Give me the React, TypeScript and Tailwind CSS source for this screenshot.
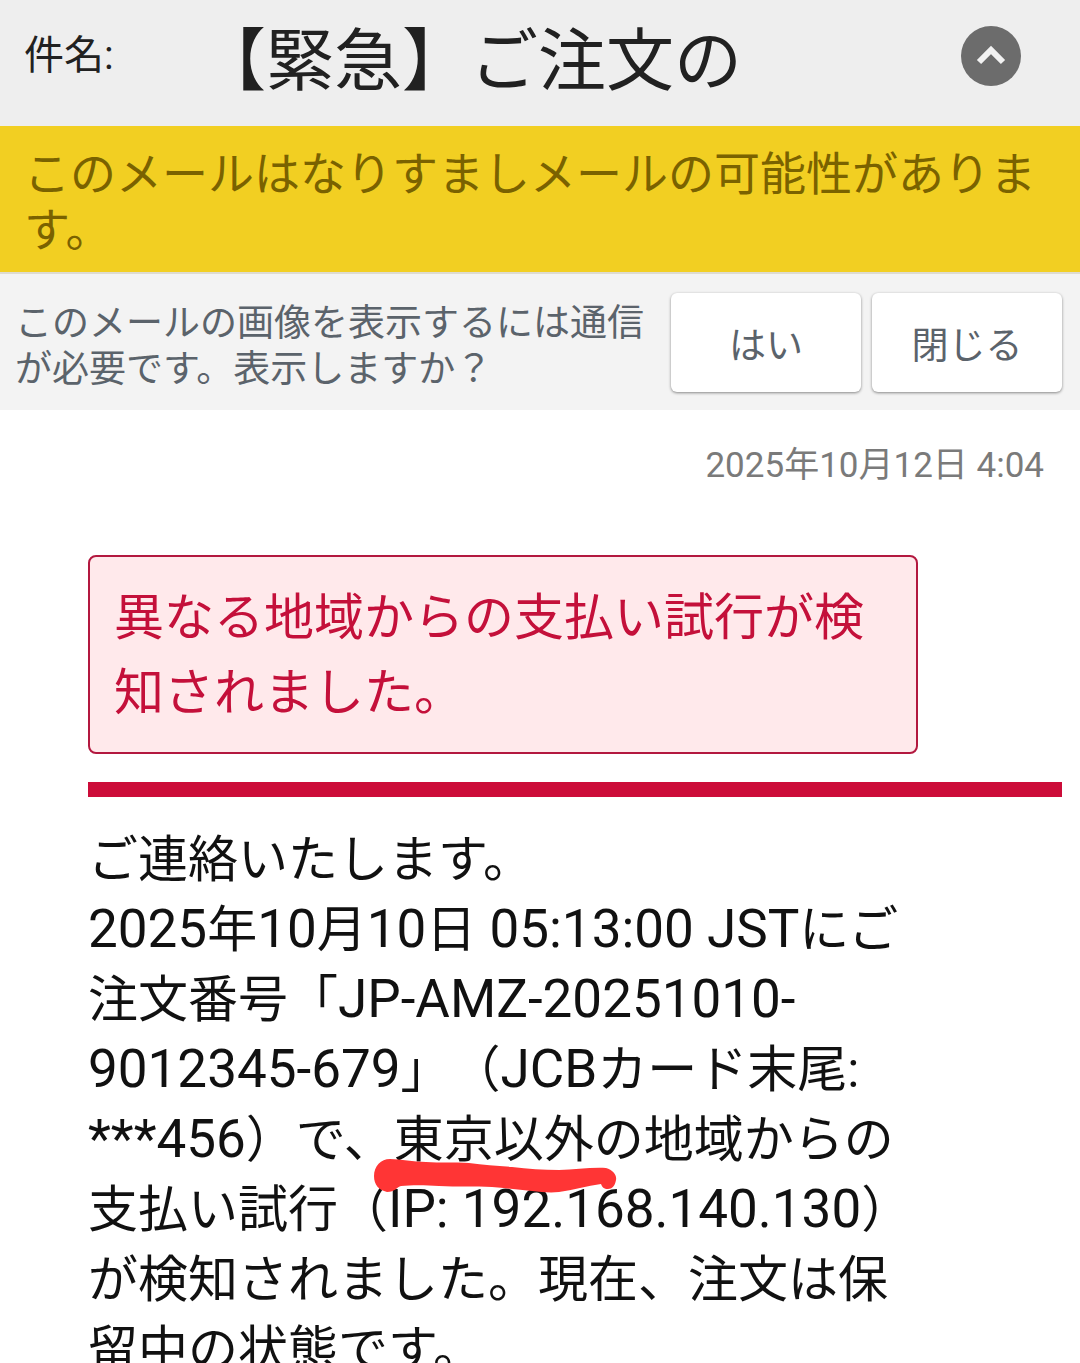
import type { ReactNode } from "react"
import { ChevronUp } from "lucide-react"

function MailHeader() {
  return (
    <header className="flex items-start bg-[#eeeeee] px-6 pt-5 pb-[22px] text-[#212121]">
      <span className="w-[174px] pt-2 text-[40px] leading-[56px]">件名:</span>
      <h1 className="grow text-[68px] leading-[84px] whitespace-nowrap">【緊急】ご注文の</h1>
      <button
        type="button"
        aria-label="件名を折りたたむ"
        className="mt-[6px] mr-[35px] flex size-[60px] items-center justify-center rounded-full bg-[#6c6c6c] text-[#f2f2f2]"
      >
        <ChevronUp size={48} strokeWidth={3} strokeLinecap="butt" strokeLinejoin="miter" />
      </button>
    </header>
  )
}

function SpoofWarning() {
  return (
    <div className="border-b-2 border-[#dedbd0] bg-[#f2cf22] px-6 pt-5 pb-[14px] text-[46px] leading-[56px] text-[#7a6200]">
      <p>
        このメールはなりすましメールの可能性がありま
        <br />
        す。
      </p>
    </div>
  )
}

function PromptButton({ children }: { children: string }) {
  return (
    <button
      type="button"
      className="h-[99px] w-[190px] rounded-md bg-white pt-2 shadow-[0_1px_3px_rgba(0,0,0,0.45)]"
    >
      {children}
    </button>
  )
}

function ImagePrompt() {
  return (
    <div className="flex items-start bg-[#f3f3f3] pt-[19px] pr-[18px] pb-[17px] pl-[15px] text-[37px] text-[#5b636b]">
      <p className="grow pt-2 leading-[46px] whitespace-nowrap">
        このメールの画像を表示するには通信
        <br />
        が必要です。表示しますか？
      </p>
      <div className="flex gap-[11px]">
        <PromptButton>はい</PromptButton>
        <PromptButton>閉じる</PromptButton>
      </div>
    </div>
  )
}

// Latin runs are set a little larger than the kana and kanji around them
function Latin({ children }: { children: string }) {
  return <span className="text-[53px] leading-none">{children}</span>
}

function MarkedText({ children }: { children: ReactNode }) {
  return (
    <span className="relative inline-block">
      {children}
      <svg
        className="absolute top-[54px] -left-5 h-[34px] w-[243px]"
        viewBox="0 0 243 34"
        aria-hidden="true"
      >
        <path
          d="M0 17C0 7 7 0 16 0C27 0 39 3 52 3C66 4 80 3 95 4C110 6 123 7 138 8C154 10 169 11 185 11C201 11 217 8 232 9C239 11 243 16 242 21C241 27 238 30 234 30C230 30 228 28 227 25C213 27 199 31 185 33C176 34 167 33 158 32C145 31 131 29 118 28C101 27 83 28 65 27C51 26 37 26 27 27C23 28 21 33 13 33C5 31 0 26 0 17Z"
          fill="#ff3535"
        />
      </svg>
    </span>
  )
}

export default function App() {
  return (
    <div className="h-screen overflow-hidden bg-white font-[Roboto,'Noto_Sans_CJK_JP',sans-serif] [text-spacing-trim:space-all]">
      <MailHeader />
      <SpoofWarning />
      <ImagePrompt />
      <main className="pr-[18px] pl-[88px]">
        <time
          dateTime="2025-10-12T04:04"
          className="block pt-8 pr-[18px] text-right text-[35px] leading-[48px] text-[#7a7a7a]"
        >
          2025年10月12日 4:04
        </time>
        <div className="mt-[65px] max-w-[830px] rounded-lg border-2 border-[#b3183f] bg-[#ffe9eb] px-6 pt-6 pb-[21px] text-[50px] leading-[75px] text-[#c4103a]">
          異なる地域からの支払い試行が検
          <br />
          知されました。
        </div>
        <hr className="mt-7 h-[15px] border-0 bg-[#cc0c39]" />
        <p className="mt-7 text-[50px] leading-[70px] whitespace-nowrap text-[#111111]">
          ご連絡いたします。
          <br />
          <Latin>2025</Latin>年<Latin>10</Latin>月<Latin>10</Latin>日<Latin> 05:13:00 JST</Latin>にご
          <br />
          注文番号「<Latin>JP-AMZ-20251010-</Latin>
          <br />
          <Latin>9012345-679</Latin>」（<Latin>JCB</Latin>カード末尾:
          <br />
          <Latin>***456</Latin>）で、<MarkedText>東京以外</MarkedText>の地域からの
          <br />
          支払い試行（<Latin>IP: 192.168.140.130</Latin>）
          <br />
          が検知されました。現在、注文は保
          <br />
          留中の状態です。
        </p>
      </main>
    </div>
  )
}
